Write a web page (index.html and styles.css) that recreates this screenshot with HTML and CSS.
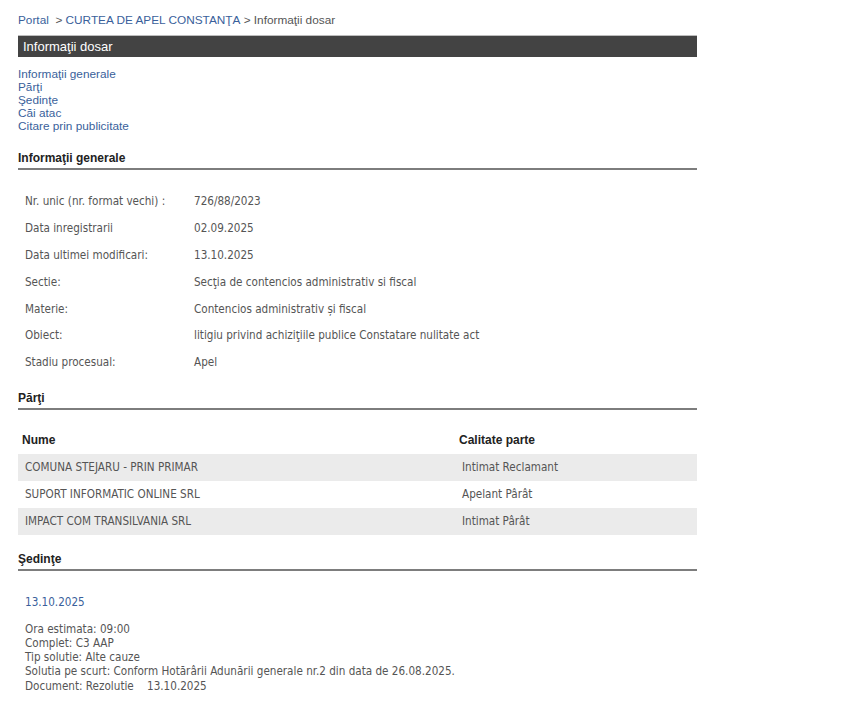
FILE: index.html
```html
<!DOCTYPE html>
<html lang="ro">
<head>
<meta charset="utf-8">
<title>Informaţii dosar</title>
<link rel="stylesheet" href="styles.css">
</head>
<body>
<div class="page">
  <div class="crumbs"><a href="#">Portal</a>&nbsp; <span class="sep">&gt;</span> <a href="#">CURTEA DE APEL CONSTANŢA</a>&nbsp;<span class="sep">&gt; Informaţii dosar</span></div>
  <div class="titlebar">Informaţii dosar</div>
  <ul class="nav">
    <li><a href="#">Informaţii generale</a></li>
    <li><a href="#">Părţi</a></li>
    <li><a href="#">Şedinţe</a></li>
    <li><a href="#">Căi atac</a></li>
    <li><a href="#">Citare prin publicitate</a></li>
  </ul>

  <h2 class="section first">Informaţii generale</h2>
  <table class="info">
    <tr><td class="lbl">Nr. unic (nr. format vechi) :</td><td>726/88/2023</td></tr>
    <tr><td class="lbl">Data inregistrarii</td><td>02.09.2025</td></tr>
    <tr><td class="lbl">Data ultimei modificari:</td><td>13.10.2025</td></tr>
    <tr><td class="lbl">Sectie:</td><td>Secţia de contencios administrativ si fiscal</td></tr>
    <tr><td class="lbl">Materie:</td><td>Contencios administrativ și fiscal</td></tr>
    <tr><td class="lbl">Obiect:</td><td>litigiu privind achiziţiile publice Constatare nulitate act</td></tr>
    <tr><td class="lbl">Stadiu procesual:</td><td>Apel</td></tr>
  </table>

  <h2 class="section">Părţi</h2>
  <table class="parti">
    <thead>
      <tr><th class="c1">Nume</th><th>Calitate parte</th></tr>
    </thead>
    <tbody>
      <tr class="odd"><td>COMUNA STEJARU - PRIN PRIMAR</td><td>Intimat Reclamant</td></tr>
      <tr><td>SUPORT INFORMATIC ONLINE SRL</td><td>Apelant Pârât</td></tr>
      <tr class="odd"><td>IMPACT COM TRANSILVANIA SRL</td><td>Intimat Pârât</td></tr>
    </tbody>
  </table>

  <h2 class="section sed">Şedinţe</h2>
  <div class="sedinta">
    <div class="sdate">13.10.2025</div>
    <div class="sdet">
      <div>Ora estimata: 09:00</div>
      <div>Complet: C3 AAP</div>
      <div>Tip solutie: Alte cauze</div>
      <div>Solutia pe scurt: Conform Hotărârii Adunării generale nr.2 din data de 26.08.2025.</div>
      <div>Document: Rezolutie&nbsp;&nbsp;&nbsp; 13.10.2025</div>
    </div>
  </div>
</div>
</body>
</html>
```

FILE: styles.css
```css
html, body {
  margin: 0;
  padding: 0;
  background: #fff;
}
body {
  font-family: "Liberation Sans", Arial, sans-serif;
  font-size: 12px;
  color: #444;
}
.page {
  width: 679px;
  padding: 12px 0 0 18px;
}
a {
  color: #3a5f9b;
  text-decoration: none;
}
.crumbs {
  height: 16px;
  line-height: 16px;
  margin-bottom: 7px;
  font-size: 11.8px;
}
.crumbs .sep {
  color: #555;
}
.titlebar {
  background: #434343;
  border-top: 1px solid #bdbdbd;
  color: #fff;
  font-size: 13px;
  height: 21px;
  line-height: 21px;
  padding-left: 5px;
}
.nav {
  list-style: none;
  margin: 11px 0 0 0;
  padding: 0;
  font-size: 11.8px;
}
.nav li {
  line-height: 13px;
  height: 13px;
}
.section {
  font-size: 12px;
  font-weight: bold;
  color: #222;
  margin: 15px 0 0 0;
  padding: 0 0 3px 0;
  line-height: 14px;
  border-bottom: 2px solid #7d7d7d;
}
.section.first {
  margin-top: 18px;
}
.section.sed {
  margin-top: 17px;
}
.info, .parti {
  border-collapse: collapse;
  width: 100%;
  font-family: "DejaVu Sans Condensed", "DejaVu Sans", sans-serif;
  font-size: 11.6px;
  color: #555;
}
.info {
  margin-top: 18px;
}
.info td {
  height: 26.8px;
  padding: 0 0 0 7px;
  vertical-align: middle;
}
.info td.lbl {
  width: 162px;
}
.parti {
  margin-top: 16px;
}
.parti th {
  font-family: "Liberation Sans", Arial, sans-serif;
  font-size: 12px;
  font-weight: bold;
  color: #222;
  text-align: left;
  height: 28px;
  padding: 0 0 0 4px;
  vertical-align: middle;
}
.parti th.c1 {
  width: 433px;
}
.parti td {
  height: 27px;
  padding: 0 0 0 7px;
  vertical-align: middle;
}
.parti tr.odd td {
  background: #ebebeb;
}
.sedinta {
  padding-left: 7px;
  font-family: "DejaVu Sans Condensed", "DejaVu Sans", sans-serif;
  font-size: 11.6px;
  color: #555;
}
.sdate {
  color: #3a5f9b;
  margin-top: 24px;
  line-height: 14px;
}
.sdet {
  margin-top: 13px;
  line-height: 14.3px;
}
```
